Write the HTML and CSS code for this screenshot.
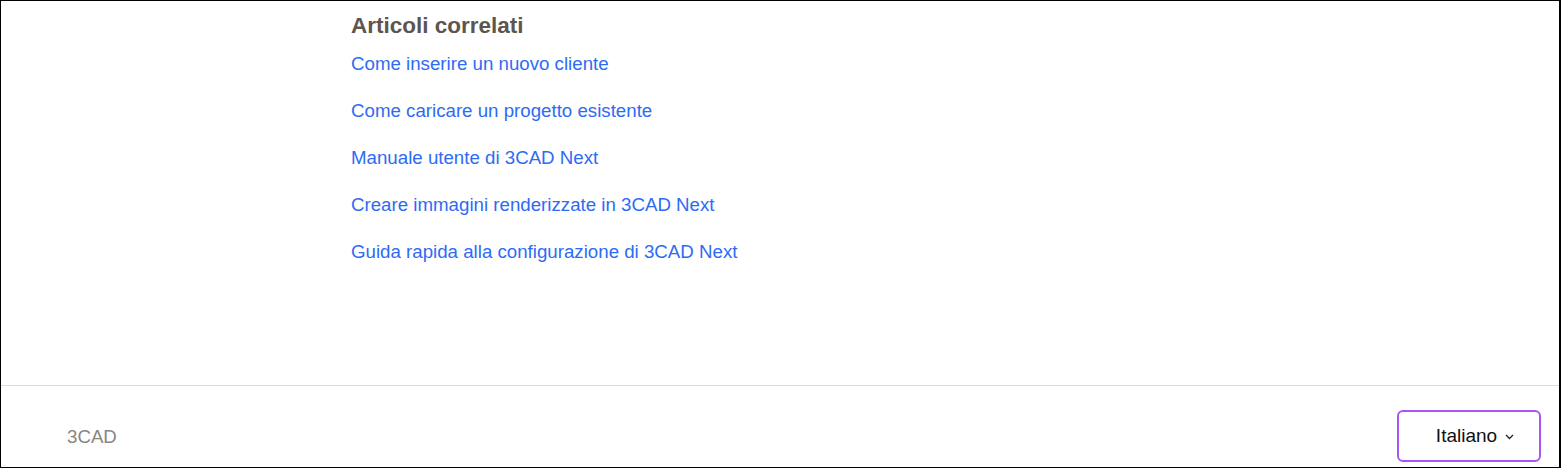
FILE: index.html
```html
<!DOCTYPE html>
<html lang="it">
<head>
<meta charset="utf-8">
<title>Articoli correlati</title>
<link rel="stylesheet" href="styles.css">
</head>
<body>
<div class="frame">
  <main class="content">
    <section class="related">
      <h2 class="related-title">Articoli correlati</h2>
      <ul class="related-list">
        <li><a href="#">Come inserire un nuovo cliente</a></li>
        <li><a href="#">Come caricare un progetto esistente</a></li>
        <li><a href="#">Manuale utente di 3CAD Next</a></li>
        <li><a href="#">Creare immagini renderizzate in 3CAD Next</a></li>
        <li><a href="#">Guida rapida alla configurazione di 3CAD Next</a></li>
      </ul>
    </section>
  </main>
  <footer class="footer">
    <div class="brand">3CAD</div>
    <button class="lang" type="button">Italiano <svg class="chev" width="9" height="6" viewBox="0 0 9 6"><path d="M1 1 L4.5 4.5 L8 1" fill="none" stroke="#222" stroke-width="1.3"/></svg></button>
  </footer>
</div>
</body>
</html>
```
FILE: styles.css
```css
html, body {
  margin: 0;
  padding: 0;
  background: #fff;
}
body {
  font-family: "Liberation Sans", Arial, sans-serif;
}
.frame {
  box-sizing: border-box;
  width: 1561px;
  height: 468px;
  border: 1px solid #000;
  border-right-width: 2px;
  display: flex;
  flex-direction: column;
}
.content {
  flex: 1;
  padding-left: 350px;
  padding-top: 11px;
}
.related-title {
  margin: 0;
  font-size: 22.5px;
  line-height: 28px;
  font-weight: bold;
  color: #5c5550;
}
.related-list {
  list-style: none;
  margin: 0;
  padding: 0;
  display: flex;
  flex-direction: column;
  gap: 25px;
  margin-top: 13px;
}
.related-list a {
  font-size: 18.7px;
  line-height: 22px;
  color: #2d6bf5;
  text-decoration: none;
}
.footer {
  height: 81px;
  border-top: 1px solid #dcdcdc;
  display: flex;
  align-items: center;
  justify-content: space-between;
  padding: 0 18px 0 66px;
}
.brand {
  font-size: 18.7px;
  color: #8a8580;
  margin-top: 21px;
}
.lang {
  box-sizing: border-box;
  width: 144px;
  height: 52px;
  margin-top: 18px;
  border: 2px solid #a855f7;
  border-radius: 6px;
  background: #fff;
  font-family: "Liberation Sans", Arial, sans-serif;
  font-size: 19px;
  color: #111;
  display: flex;
  align-items: center;
  justify-content: center;
  gap: 8px;
  padding: 0 0 0 12px;
}
.chev {
  margin-top: 3px;
}
```
